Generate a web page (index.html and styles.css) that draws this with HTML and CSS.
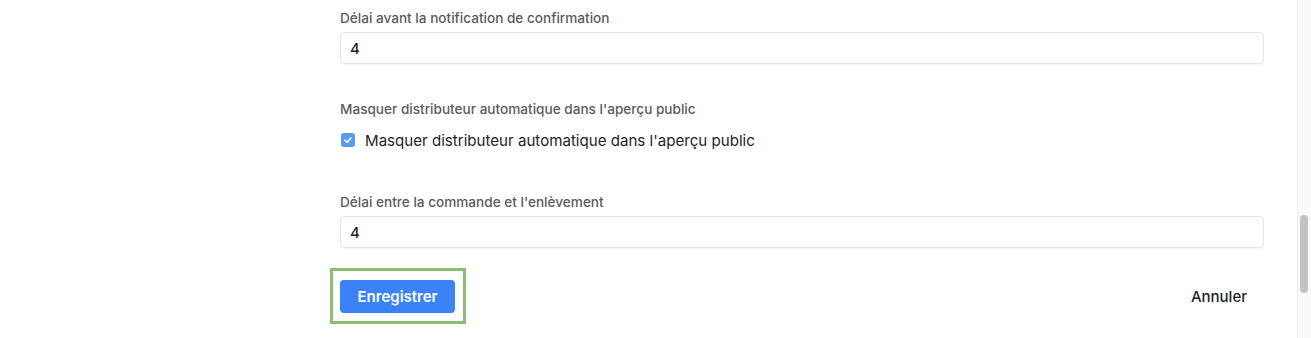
FILE: index.html
```html
<!DOCTYPE html>
<html lang="fr">
<head>
<meta charset="utf-8">
<title>Paramètres</title>
<link rel="stylesheet" href="styles.css">
</head>
<body>
<div class="page">
  <main class="main">
    <form class="form">
      <div class="field">
        <label class="label" for="f1">Délai avant la notification de confirmation</label>
        <input class="input" id="f1" type="text" value="4">
      </div>
      <div class="field field-check">
        <div class="label">Masquer distributeur automatique dans l'aperçu public</div>
        <label class="check-row">
          <span class="checkbox">
            <svg viewBox="0 0 14 14" width="14" height="14"><path d="M4 7.2l2 2 4-4.2" fill="none" stroke="#fff" stroke-width="1.6" stroke-linecap="round" stroke-linejoin="round"/></svg>
          </span>
          <span class="check-text">Masquer distributeur automatique dans l'aperçu public</span>
        </label>
      </div>
      <div class="field field-last">
        <label class="label" for="f3">Délai entre la commande et l'enlèvement</label>
        <input class="input" id="f3" type="text" value="4">
      </div>
      <div class="actions">
        <div class="highlight">
          <button type="button" class="btn-primary">Enregistrer</button>
        </div>
        <button type="button" class="btn-cancel">Annuler</button>
      </div>
    </form>
  </main>
  <div class="scrollbar"><div class="thumb"></div></div>
</div>
</body>
</html>
```
FILE: styles.css
```css
* { box-sizing: border-box; }
html, body { margin: 0; padding: 0; background: #fff; }
body {
  font-family: Inter, "Liberation Sans", Arial, sans-serif;
  color: #1f2328;
  width: 1311px;
  height: 338px;
  overflow: hidden;
}
.page {
  display: flex;
  height: 338px;
}
.main {
  flex: 1;
  padding: 8px 33px 0 340px;
}
.form {
  display: flex;
  flex-direction: column;
}
.field {
  display: flex;
  flex-direction: column;
}
.label {
  font-size: 13.6px;
  line-height: 20px;
  font-weight: 500;
  color: #585c62;
  margin-bottom: 4px;
}
.input {
  height: 32px;
  width: 100%;
  border: 1px solid #e4e6ea;
  border-radius: 4px;
  padding: 0 9px;
  font-family: inherit;
  font-size: 15px;
  font-weight: 500;
  color: #1f2328;
  background: #fff;
  box-shadow: 0 1px 1px rgba(0,0,0,0.03);
  outline: none;
}
.field-check { margin-top: 35px; }
.field-check .label { margin-bottom: 11px; }
.check-row {
  display: flex;
  align-items: center;
  gap: 10px;
  height: 20px;
  padding-left: 1px;
}
.checkbox {
  width: 14px;
  height: 14px;
  border-radius: 3px;
  background: #5a9bef;
  display: flex;
}
.check-text {
  font-size: 15.1px;
  color: #1f2328;
}
.field-last { margin-top: 42px; }
.field-last .label { margin-bottom: 4px; }
.actions {
  margin-top: 20px;
  display: flex;
  justify-content: space-between;
  align-items: center;
}
.highlight {
  margin-left: -10px;
  border: 3px solid #8fbd74;
  padding: 9px 8px 8px 7px;
}
.btn-primary {
  display: block;
  height: 33px;
  padding: 0 17.5px;
  background: #3b82f6;
  color: #fff;
  border: none;
  border-radius: 4px;
  font-family: inherit;
  font-size: 15px;
  font-weight: 600;
}
.btn-cancel {
  background: none;
  border: none;
  padding: 0 17px;
  height: 33px;
  font-family: inherit;
  font-size: 15px;
  font-weight: 500;
  color: #1f2328;
}
.scrollbar {
  width: 14px;
  background: #fafafa;
  border-left: 1px solid #ececec;
  padding-top: 215px;
  padding-left: 2px;
}
.thumb {
  width: 8px;
  height: 78px;
  border-radius: 4px;
  background: #c2c2c2;
}
```
